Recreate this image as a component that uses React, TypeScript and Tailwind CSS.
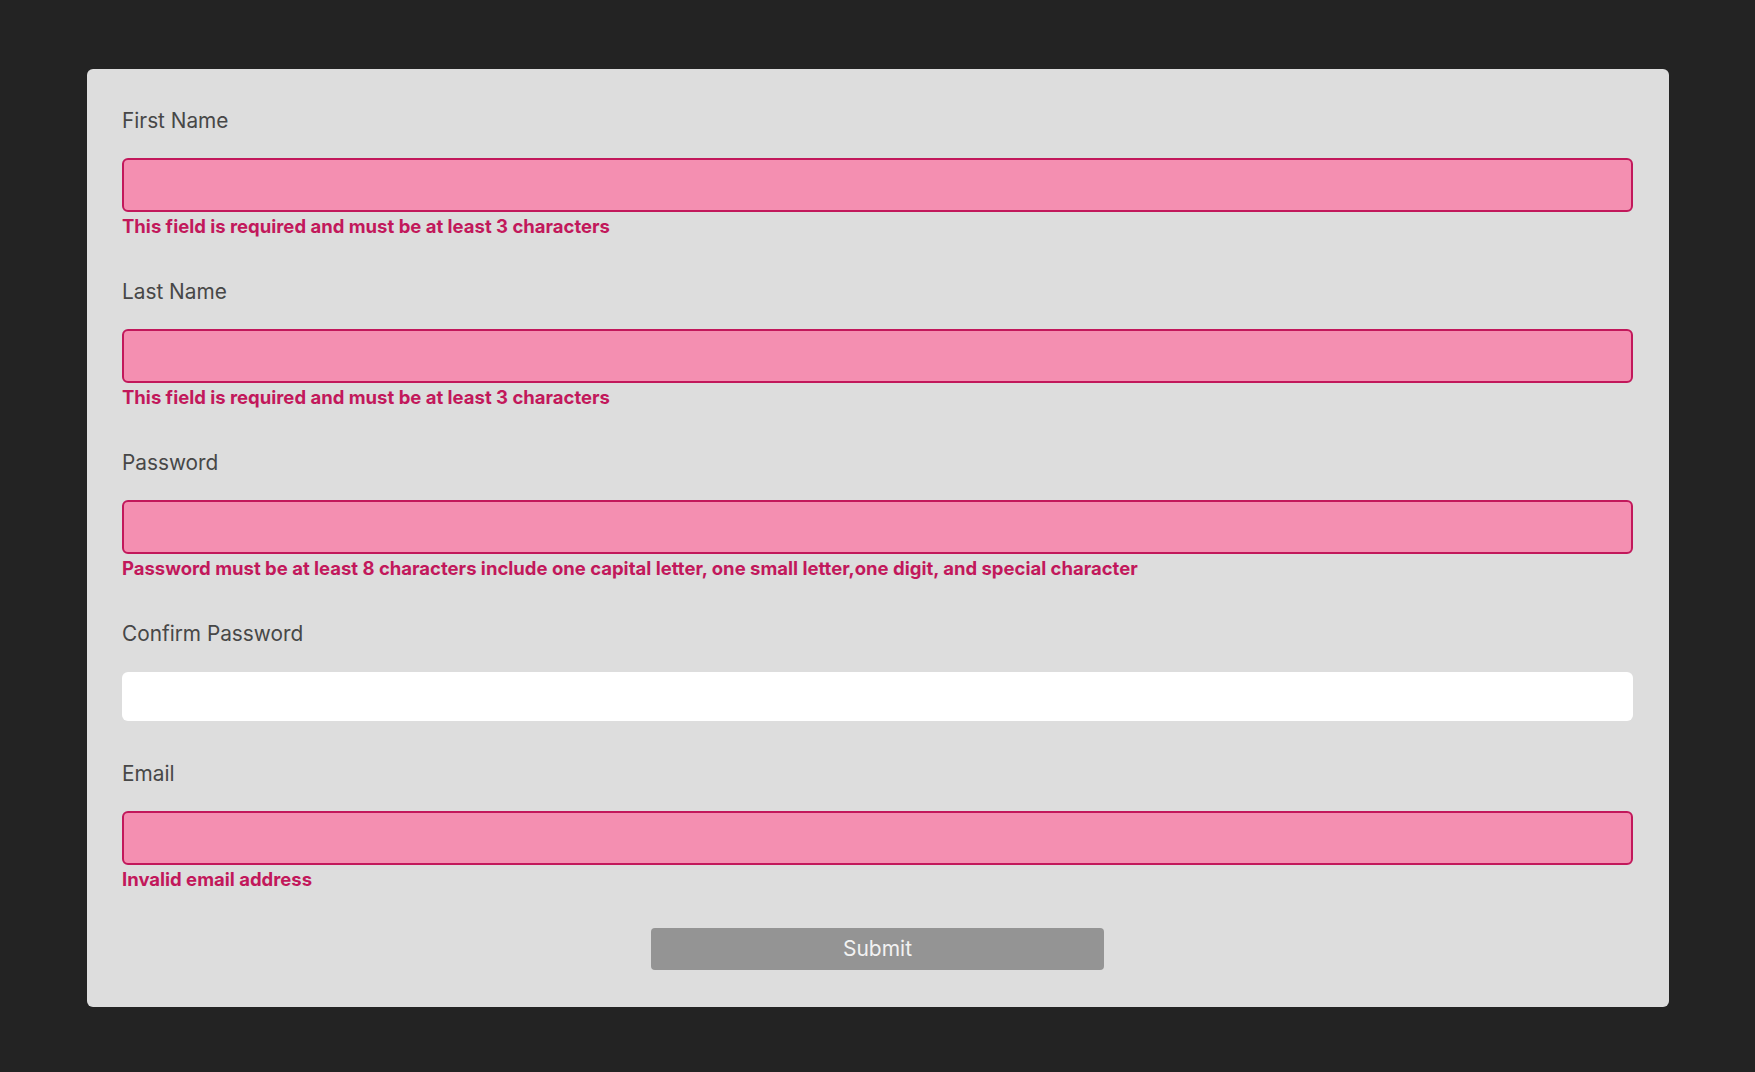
const fields = [
  { label: "First Name", error: "This field is required and must be at least 3 characters" },
  { label: "Last Name", error: "This field is required and must be at least 3 characters" },
  {
    label: "Password",
    error:
      "Password must be at least 8 characters include one capital letter, one small letter,one digit, and special character",
  },
  { label: "Confirm Password", error: "" },
  { label: "Email", error: "Invalid email address" },
];

export default function App() {
  return (
    <div
      className="min-h-screen bg-[#232323] pl-[87px] pr-[86px] pt-[69px] pb-[66px]"
      style={{ fontFamily: "Inter, 'Noto Sans', sans-serif" }}
    >
      <form className="flex flex-col rounded-md bg-[#dddddd] pl-[35px] pr-[36px] pt-[38px] pb-[37px]">
        {fields.map((f) => (
          <div key={f.label} className="mb-[39px] flex flex-col">
            <label className="text-[20.8px] leading-[28px] text-[#474747]">{f.label}</label>
            {f.error ? (
              <>
                <input className="mt-[23px] h-[54px] w-full rounded-md border-2 border-[#c2185b] bg-[#f48fb1] px-3 outline-none" />
                <p className="mt-[2px] text-[18.5px] leading-[25px] font-bold text-[#c2185b]">{f.error}</p>
              </>
            ) : (
              <input className="mt-[24px] h-[49px] w-full rounded-md bg-white px-3 outline-none" />
            )}
          </div>
        ))}
        <button
          type="button"
          className="mx-auto -mt-[3px] h-[42px] w-[453px] rounded bg-[#949494] text-[21px] text-[#f2f2f2]"
        >
          Submit
        </button>
      </form>
    </div>
  );
}
